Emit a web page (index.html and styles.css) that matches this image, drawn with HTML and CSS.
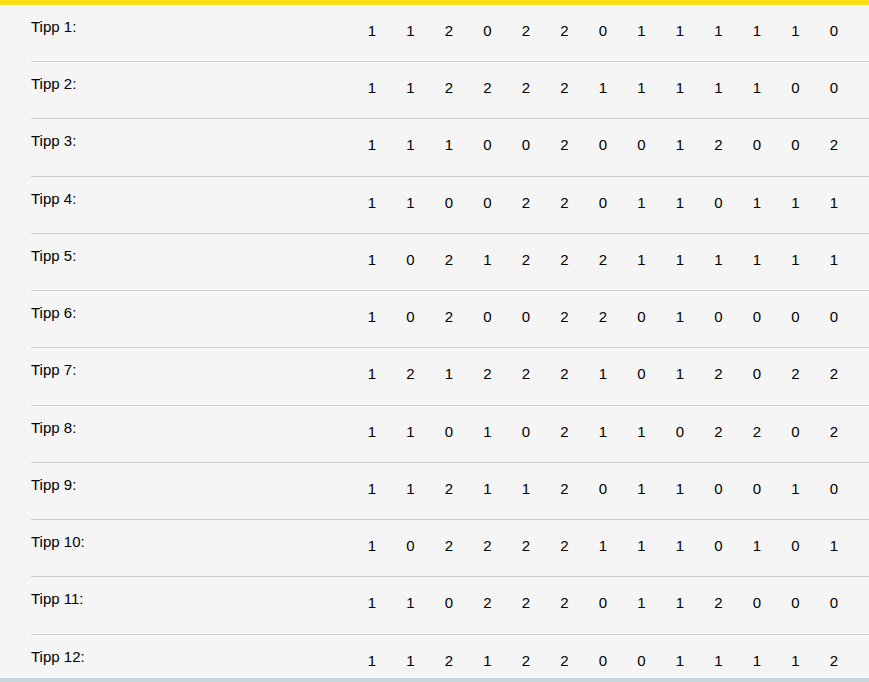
FILE: index.html
```html
<!DOCTYPE html>
<html lang="de">
<head>
<meta charset="utf-8">
<title>Tipps</title>
<link rel="stylesheet" href="styles.css">
</head>
<body>
<div class="page">
  <div class="tips">
    <div class="row"><div class="label">Tipp 1:</div><span>1</span><span>1</span><span>2</span><span>0</span><span>2</span><span>2</span><span>0</span><span>1</span><span>1</span><span>1</span><span>1</span><span>1</span><span>0</span></div>
    <div class="row"><div class="label">Tipp 2:</div><span>1</span><span>1</span><span>2</span><span>2</span><span>2</span><span>2</span><span>1</span><span>1</span><span>1</span><span>1</span><span>1</span><span>0</span><span>0</span></div>
    <div class="row"><div class="label">Tipp 3:</div><span>1</span><span>1</span><span>1</span><span>0</span><span>0</span><span>2</span><span>0</span><span>0</span><span>1</span><span>2</span><span>0</span><span>0</span><span>2</span></div>
    <div class="row"><div class="label">Tipp 4:</div><span>1</span><span>1</span><span>0</span><span>0</span><span>2</span><span>2</span><span>0</span><span>1</span><span>1</span><span>0</span><span>1</span><span>1</span><span>1</span></div>
    <div class="row"><div class="label">Tipp 5:</div><span>1</span><span>0</span><span>2</span><span>1</span><span>2</span><span>2</span><span>2</span><span>1</span><span>1</span><span>1</span><span>1</span><span>1</span><span>1</span></div>
    <div class="row"><div class="label">Tipp 6:</div><span>1</span><span>0</span><span>2</span><span>0</span><span>0</span><span>2</span><span>2</span><span>0</span><span>1</span><span>0</span><span>0</span><span>0</span><span>0</span></div>
    <div class="row"><div class="label">Tipp 7:</div><span>1</span><span>2</span><span>1</span><span>2</span><span>2</span><span>2</span><span>1</span><span>0</span><span>1</span><span>2</span><span>0</span><span>2</span><span>2</span></div>
    <div class="row"><div class="label">Tipp 8:</div><span>1</span><span>1</span><span>0</span><span>1</span><span>0</span><span>2</span><span>1</span><span>1</span><span>0</span><span>2</span><span>2</span><span>0</span><span>2</span></div>
    <div class="row"><div class="label">Tipp 9:</div><span>1</span><span>1</span><span>2</span><span>1</span><span>1</span><span>2</span><span>0</span><span>1</span><span>1</span><span>0</span><span>0</span><span>1</span><span>0</span></div>
    <div class="row"><div class="label">Tipp 10:</div><span>1</span><span>0</span><span>2</span><span>2</span><span>2</span><span>2</span><span>1</span><span>1</span><span>1</span><span>0</span><span>1</span><span>0</span><span>1</span></div>
    <div class="row"><div class="label">Tipp 11:</div><span>1</span><span>1</span><span>0</span><span>2</span><span>2</span><span>2</span><span>0</span><span>1</span><span>1</span><span>2</span><span>0</span><span>0</span><span>0</span></div>
    <div class="row"><div class="label">Tipp 12:</div><span>1</span><span>1</span><span>2</span><span>1</span><span>2</span><span>2</span><span>0</span><span>0</span><span>1</span><span>1</span><span>1</span><span>1</span><span>2</span></div>
  </div>
</div>
<div class="bottom-bar"></div>
</body>
</html>
```

FILE: styles.css
```css
html, body {
  margin: 0;
  padding: 0;
  background: #f5f5f5;
}

body {
  font-family: "Liberation Sans", Arial, sans-serif;
  font-size: 15px;
  line-height: 17px;
  color: #000;
  overflow: hidden;
}

.page {
  border-top: 5px solid #f9dc15;
  background: #f5f5f5;
}

.tips {
  margin-left: 31px;
}

.row {
  display: grid;
  grid-template-columns: 321.75px repeat(13, 38.5px);
  height: 57.25px;
  box-sizing: border-box;
  border-bottom: 1px solid #cfcfcf;
}

.row:first-child {
  height: 57px;
}

.row:last-child {
  border-bottom: none;
}

.label {
  padding-top: 13px;
}

.row span {
  text-align: center;
  padding-top: 17px;
}

.bottom-bar {
  position: fixed;
  left: 0;
  right: 0;
  bottom: 0;
  height: 4px;
  background: #c6d6dc;
}
```
